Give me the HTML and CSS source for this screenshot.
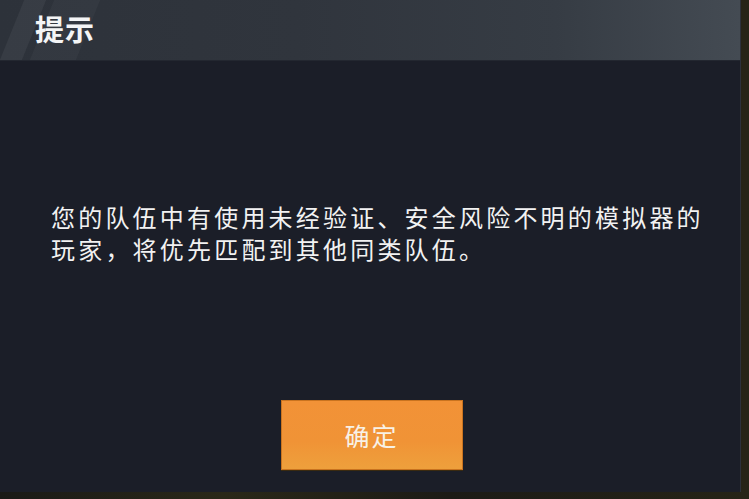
FILE: index.html
```html
<!DOCTYPE html>
<html lang="zh">
<head>
<meta charset="utf-8">
<link rel="stylesheet" href="styles.css">
</head>
<body>
<div class="screen">
  <div class="dialog">
    <div class="header">
      <div class="streak streak-a"></div>
      <div class="streak streak-b"></div>
      <h1 class="title">提示</h1>
    </div>
    <div class="content">
      <p class="message">您的队伍中有使用未经验证、安全风险不明的模拟器的<br>玩家，将优先匹配到其他同类队伍。</p>
      <div class="actions">
        <button class="confirm">确定</button>
      </div>
    </div>
  </div>
</div>
</body>
</html>
```
FILE: styles.css
```css
html, body {
  margin: 0;
  padding: 0;
  width: 749px;
  height: 499px;
  overflow: hidden;
  background: #15161a;
  font-family: "Noto Sans CJK SC", "Noto Sans", sans-serif;
}
.screen {
  width: 749px;
  height: 499px;
  background: linear-gradient(90deg, #1a1a17 0%, #2a2818 30%, #1c1b16 60%, #262417 100%);
  display: flex;
  align-items: flex-start;
}
.dialog {
  width: 741px;
  height: 492px;
  background: #1b1e28;
  display: flex;
  flex-direction: column;
  border-right: 1px solid #2c313b;
  box-sizing: border-box;
}
.header {
  position: relative;
  height: 61px;
  flex: none;
  background: linear-gradient(90deg, #2d323a 0%, #30353d 40%, #363c44 75%, #444b53 100%);
  border-bottom: 1px solid #232730;
  box-sizing: border-box;
  overflow: hidden;
}
.streak {
  position: absolute;
  top: -10px;
  height: 90px;
  transform: skewX(-22deg);
}
.streak-a {
  left: 10px;
  width: 22px;
  background: rgba(255, 255, 255, 0.05);
}
.streak-b {
  left: 40px;
  width: 46px;
  background: rgba(255, 255, 255, 0.03);
}
.title {
  position: relative;
  margin: 0;
  padding: 8px 0 0 35px;
  font-size: 29px;
  line-height: 40px;
  font-weight: 700;
  color: #f4f5f6;
  letter-spacing: 1px;
}
.content {
  flex: 1;
  display: flex;
  flex-direction: column;
  background: #1b1e28;
}
.message {
  margin: 140px 0 0 51px;
  font-size: 24px;
  line-height: 32px;
  letter-spacing: 3.2px;
  color: #f2f2f2;
  font-weight: 400;
}
.actions {
  display: flex;
  justify-content: center;
  margin-top: 135px;
}
.confirm {
  width: 182px;
  height: 70px;
  margin-left: 3px;
  border: 1px solid #c9731f;
  background: linear-gradient(180deg, #f29237 0%, #f09336 60%, #eea03c 100%);
  color: #f8f1e6;
  font-family: "Noto Sans CJK SC", sans-serif;
  font-size: 25px;
  letter-spacing: 2px;
  padding: 0;
  box-shadow: 0 1px 0 #3a2a10;
}
```
